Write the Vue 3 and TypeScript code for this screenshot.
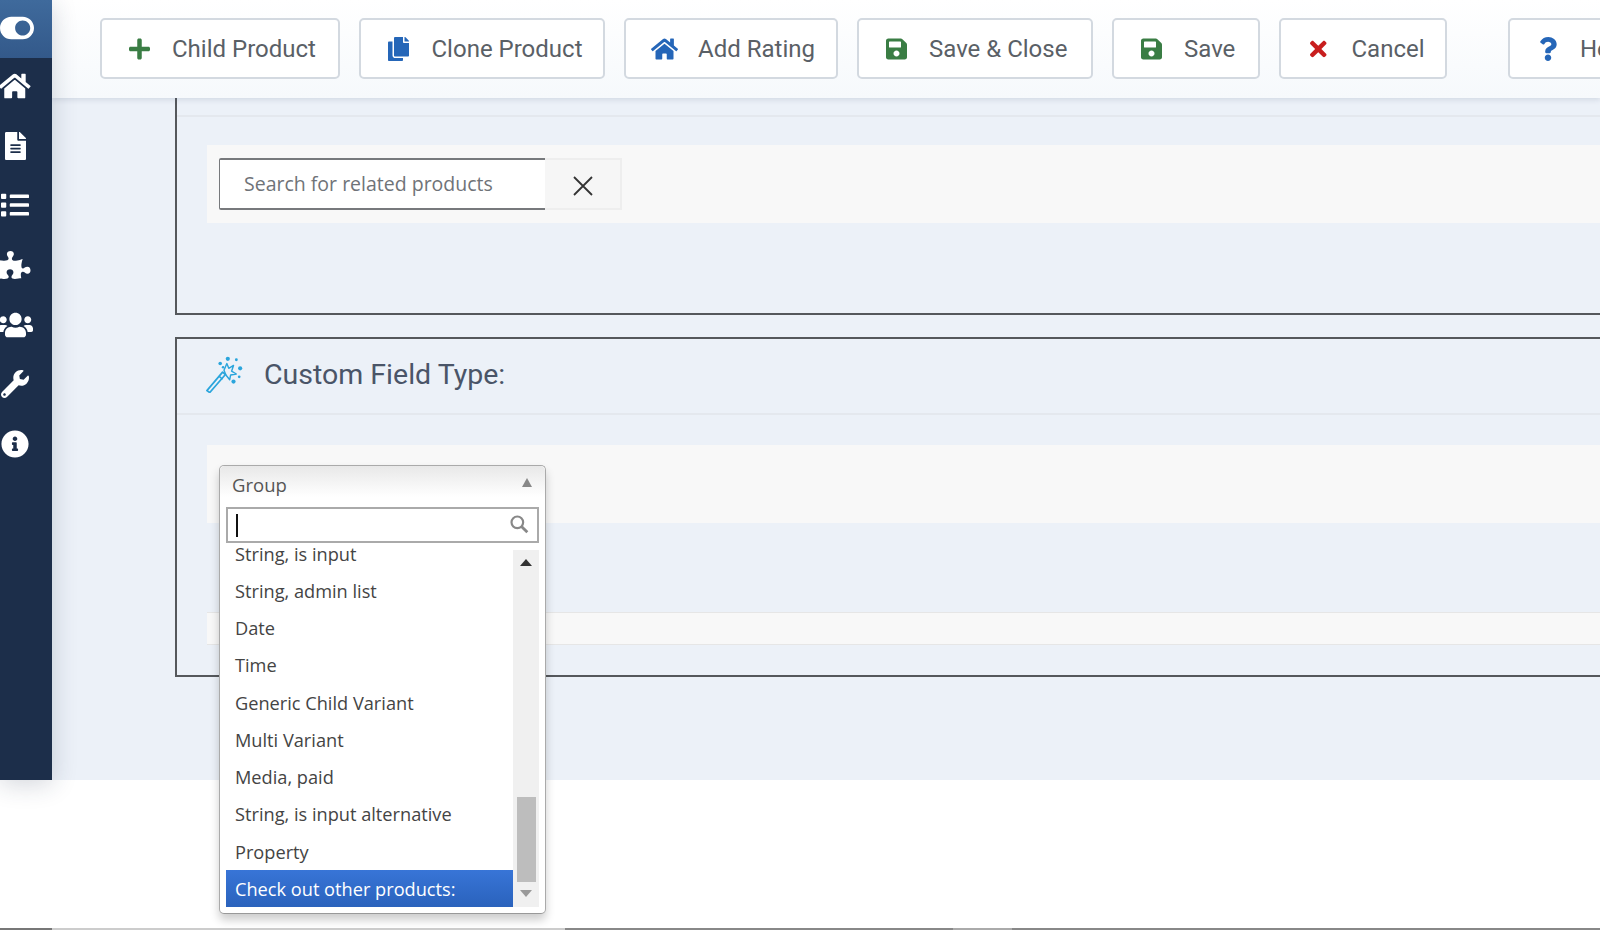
<template>
  <div class="page">
    <div class="frame">
      <aside class="sidebar">
        <div class="brand">
          <svg class="side-icon" viewBox="0 0 576 512"><path :d="icons.toggle" /></svg>
        </div>
        <nav class="side-nav">
          <a v-for="item in sideItems" :key="item.name" class="side-item">
            <svg class="side-icon" :viewBox="item.box"><path :d="item.path" /></svg>
          </a>
        </nav>
      </aside>

      <main class="main">
        <header class="toolbar">
          <button v-for="btn in buttons" :key="btn.label" class="tool-btn" :class="btn.cls">
            <svg class="tool-icon" :class="btn.color" :viewBox="btn.box"><path :d="btn.path" /></svg>
            <span>{{ btn.label }}</span>
          </button>
        </header>

        <div class="content">
          <section class="panel first">
            <div class="panel-head-end"></div>
            <div class="strip search-strip">
              <div class="search-group">
                <input class="search-input" placeholder="Search for related products" />
                <button class="search-clear" aria-label="Clear">
                  <svg width="22" height="22" viewBox="0 0 22 22" fill="none">
                    <path d="M2 2L20 20M20 2L2 20" stroke="#333" stroke-width="1.8" />
                  </svg>
                </button>
              </div>
            </div>
          </section>

          <section class="panel second">
            <div class="panel-head">
              <svg class="wand" viewBox="0 0 40 40" fill="none">
                <path d="M2 37.5L18.5 18L21.5 20.5L5 39.5Z" stroke="#2aa5dc" stroke-width="1.8" stroke-linejoin="round" />
                <path d="M15 22.5L18.5 25.5" stroke="#2aa5dc" stroke-width="1.6" />
                <path d="M20 16L23 9L25 14L30 11L28 17L33 20L27 21L26 26L22 21Z" stroke="#2aa5dc" stroke-width="1.5" stroke-linejoin="round" />
                <g fill="#2aa5dc">
                  <circle cx="24" cy="4" r="2.2" />
                  <circle cx="33" cy="5" r="1.5" />
                  <circle cx="16" cy="9" r="1.9" />
                  <circle cx="37" cy="14" r="2.2" />
                  <circle cx="30" cy="28" r="2.2" />
                  <circle cx="19" cy="13" r="1.3" />
                  <circle cx="36" cy="23" r="1.4" />
                </g>
              </svg>
              <h2>Custom Field Type:</h2>
            </div>
            <div class="strip group-strip"></div>
            <div class="strip thin"></div>
          </section>
        </div>
      </main>
    </div>

    <footer class="foot-line"></footer>

    <!-- open chosen style dropdown, lies over the panel -->
    <div class="chosen">
      <div class="chosen-head">
        <span>Group</span>
        <i class="arrow-up"></i>
      </div>
      <div class="chosen-search">
        <i class="caret"></i>
        <svg class="search-icon" viewBox="0 0 24 24" fill="none">
          <circle cx="10" cy="10" r="7" stroke="#888" stroke-width="2.6" />
          <path d="M15 15L22 22" stroke="#888" stroke-width="3.4" />
        </svg>
      </div>
      <div class="chosen-body">
        <ul class="chosen-list">
          <li v-for="opt in options" :key="opt" :class="{ active: opt === selected }">{{ opt }}</li>
        </ul>
        <div class="scrollbar">
          <i class="sb-up"></i>
          <i class="sb-thumb"></i>
          <i class="sb-down"></i>
        </div>
      </div>
    </div>
  </div>
</template>

<script setup lang="ts">
const icons = {
  toggle: 'M384 64H192C86 64 0 150 0 256s86 192 192 192h192c106 0 192-86 192-192S490 64 384 64zm0 320c-70.8 0-128-57.3-128-128 0-70.8 57.3-128 128-128 70.8 0 128 57.3 128 128 0 70.8-57.3 128-128 128z',
  home: 'M280.37 148.26L96 300.11V464a16 16 0 0 0 16 16l112.06-.29a16 16 0 0 0 15.92-16V368a16 16 0 0 1 16-16h64a16 16 0 0 1 16 16v95.64a16 16 0 0 0 16 16.05L464 480a16 16 0 0 0 16-16V300L295.67 148.26a12.19 12.19 0 0 0-15.3 0zM571.6 251.47L488 182.56V44.05a12 12 0 0 0-12-12h-56a12 12 0 0 0-12 12v72.61L318.47 43a48 48 0 0 0-61 0L4.34 251.47a12 12 0 0 0-1.6 16.9l25.5 31A12 12 0 0 0 45.15 301l235.22-193.74a12.19 12.19 0 0 1 15.3 0L530.9 301a12 12 0 0 0 16.9-1.6l25.5-31a12 12 0 0 0-1.7-16.93z',
  file: 'M224 136V0H24C10.7 0 0 10.7 0 24v464c0 13.3 10.7 24 24 24h336c13.3 0 24-10.7 24-24V160H248c-13.2 0-24-10.8-24-24zm64 236c0 6.6-5.4 12-12 12H108c-6.6 0-12-5.4-12-12v-8c0-6.6 5.4-12 12-12h168c6.6 0 12 5.4 12 12v8zm0-64c0 6.6-5.4 12-12 12H108c-6.6 0-12-5.4-12-12v-8c0-6.6 5.4-12 12-12h168c6.6 0 12 5.4 12 12v8zm0-72v8c0 6.6-5.4 12-12 12H108c-6.6 0-12-5.4-12-12v-8c0-6.6 5.4-12 12-12h168c6.6 0 12 5.4 12 12zm96-114.1v6.1H256V0h6.1c6.4 0 12.5 2.5 17 7l97.9 98c4.5 4.5 7 10.6 7 16.9z',
  list: 'M80 368H16a16 16 0 0 0-16 16v64a16 16 0 0 0 16 16h64a16 16 0 0 0 16-16v-64a16 16 0 0 0-16-16zm0-320H16A16 16 0 0 0 0 64v64a16 16 0 0 0 16 16h64a16 16 0 0 0 16-16V64a16 16 0 0 0-16-16zm0 160H16a16 16 0 0 0-16 16v64a16 16 0 0 0 16 16h64a16 16 0 0 0 16-16v-64a16 16 0 0 0-16-16zm416 176H176a16 16 0 0 0-16 16v32a16 16 0 0 0 16 16h320a16 16 0 0 0 16-16v-32a16 16 0 0 0-16-16zm0-320H176a16 16 0 0 0-16 16v32a16 16 0 0 0 16 16h320a16 16 0 0 0 16-16V80a16 16 0 0 0-16-16zm0 160H176a16 16 0 0 0-16 16v32a16 16 0 0 0 16 16h320a16 16 0 0 0 16-16v-32a16 16 0 0 0-16-16z',
  puzzle: 'M519.442 288.651c-41.519 0-59.5 31.593-82.058 31.593C377.409 320.244 432 144 432 144s-196.288 80-196.288-3.297c0-35.827 36.288-46.25 36.288-85.985C272 19.216 243.885 0 210.539 0c-34.654 0-66.366 18.891-66.366 56.346 0 41.364 31.711 59.277 31.711 81.75C175.885 207.719 0 166.758 0 166.758v333.237s178.635 41.047 178.635-28.662c0-22.473-40-40.107-40-81.471 0-37.456 29.25-56.346 63.577-56.346 33.673 0 61.788 19.216 61.788 54.717 0 39.735-36.288 50.158-36.288 85.985 0 60.803 129.675 25.73 181.23 25.73 0 0-34.725-120.101 25.827-120.101 35.962 0 46.423 36.152 86.308 36.152C556.712 416 576 387.99 576 354.443c0-34.199-18.962-65.792-56.558-65.792z',
  users: 'M96 224c35.3 0 64-28.7 64-64s-28.7-64-64-64-64 28.7-64 64 28.7 64 64 64zm448 0c35.3 0 64-28.7 64-64s-28.7-64-64-64-64 28.7-64 64 28.7 64 64 64zm32 32h-64c-17.6 0-33.5 7.1-45.1 18.6 40.3 22.1 68.9 62 75.1 109.4h66c17.7 0 32-14.3 32-32v-32c0-35.3-28.7-64-64-64zm-256 0c61.9 0 112-50.1 112-112S381.9 32 320 32 208 82.1 208 144s50.1 112 112 112zm76.8 32h-8.3c-20.8 10-43.9 16-68.5 16s-47.6-6-68.5-16h-8.3C179.6 288 128 339.6 128 403.2V432c0 26.5 21.5 48 48 48h288c26.5 0 48-21.5 48-48v-28.8c0-63.6-51.6-115.2-115.2-115.2zm-223.7-13.4C161.5 263.1 145.6 256 128 256H64c-35.3 0-64 28.7-64 64v32c0 17.7 14.3 32 32 32h65.9c6.3-47.4 34.9-87.3 75.2-109.4z',
  wrench: 'M507.73 109.1c-2.24-9.03-13.54-12.09-20.12-5.51l-74.36 74.36-67.88-11.31-11.31-67.88 74.36-74.36c6.62-6.62 3.43-17.9-5.66-20.16-47.38-11.74-99.55.91-136.58 37.93-39.64 39.64-50.55 97.1-34.05 147.2L18.74 402.76c-24.99 24.99-24.99 65.51 0 90.5 24.99 24.99 65.51 24.99 90.5 0l213.21-213.21c50.12 16.71 107.47 5.68 147.37-34.22 37.07-37.07 49.7-89.32 37.91-136.73zM64 472c-13.25 0-24-10.75-24-24 0-13.26 10.75-24 24-24s24 10.74 24 24c0 13.25-10.75 24-24 24z',
  info: 'M256 8C119.043 8 8 119.083 8 256c0 136.997 111.043 248 248 248s248-111.003 248-248C504 119.083 392.957 8 256 8zm0 110c23.196 0 42 18.804 42 42s-18.804 42-42 42-42-18.804-42-42 18.804-42 42-42zm56 254c0 6.627-5.373 12-12 12h-88c-6.627 0-12-5.373-12-12v-24c0-6.627 5.373-12 12-12h12v-64h-12c-6.627 0-12-5.373-12-12v-24c0-6.627 5.373-12 12-12h64c6.627 0 12 5.373 12 12v100h12c6.627 0 12 5.373 12 12v24z',
  plus: 'M416 208H272V64c0-17.67-14.33-32-32-32h-32c-17.67 0-32 14.33-32 32v144H32c-17.67 0-32 14.33-32 32v32c0 17.67 14.33 32 32 32h144v144c0 17.67 14.33 32 32 32h32c17.67 0 32-14.33 32-32V304h144c17.67 0 32-14.33 32-32v-32c0-17.67-14.33-32-32-32z',
  copy: 'M320 448v40c0 13.255-10.745 24-24 24H24c-13.255 0-24-10.745-24-24V120c0-13.255 10.745-24 24-24h72v296c0 30.879 25.121 56 56 56h168zm0-344V0H152c-13.255 0-24 10.745-24 24v368c0 13.255 10.745 24 24 24h272c13.255 0 24-10.745 24-24V128H344c-13.2 0-24-10.8-24-24zm120.971-31.029L375.029 7.029A24 24 0 0 0 358.059 0H352v96h96v-6.059a24 24 0 0 0-7.029-16.97z',
  save: 'M433.941 129.941l-83.882-83.882A48 48 0 0 0 316.118 32H48C21.49 32 0 53.49 0 80v352c0 26.51 21.49 48 48 48h352c26.51 0 48-21.49 48-48V163.882a48 48 0 0 0-14.059-33.941zM224 416c-35.346 0-64-28.654-64-64 0-35.346 28.654-64 64-64s64 28.654 64 64c0 35.346-28.654 64-64 64zm96-304.52V212c0 6.627-5.373 12-12 12H76c-6.627 0-12-5.373-12-12V108c0-6.627 5.373-12 12-12h228.52c3.183 0 6.235 1.264 8.485 3.515l3.48 3.48A11.996 11.996 0 0 1 320 111.48z',
  times: 'M242.72 256l100.07-100.07c12.28-12.28 12.28-32.19 0-44.48l-22.24-22.24c-12.28-12.28-32.19-12.28-44.48 0L176 189.28 75.93 89.21c-12.28-12.28-32.19-12.28-44.48 0L9.21 111.45c-12.28 12.28-12.28 32.19 0 44.48L109.28 256 9.21 356.07c-12.28 12.28-12.28 32.19 0 44.48l22.24 22.24c12.28 12.28 32.2 12.28 44.48 0L176 322.72l100.07 100.07c12.28 12.28 32.2 12.28 44.48 0l22.24-22.24c12.28-12.28 12.28-32.19 0-44.48L242.72 256z',
  question: 'M202.021 0C122.202 0 70.503 32.703 29.914 91.026c-7.363 10.58-5.093 25.086 5.178 32.874l43.138 32.709c10.373 7.865 25.132 6.026 33.253-4.148 25.049-31.381 43.63-49.449 82.757-49.449 30.764 0 68.816 19.799 68.816 49.631 0 22.552-18.617 34.134-48.993 51.164-35.423 19.86-82.299 44.576-82.299 106.405V320c0 13.255 10.745 24 24 24h72.471c13.255 0 24-10.745 24-24v-5.773c0-42.86 125.268-44.645 125.268-160.627C377.504 66.256 286.902 0 202.021 0zM192 373.459c-38.196 0-69.271 31.075-69.271 69.271 0 38.195 31.075 69.27 69.271 69.27s69.271-31.075 69.271-69.271-31.075-69.27-69.271-69.27z',
}

const sideItems = [
  { name: 'home', box: '0 0 576 512', path: icons.home },
  { name: 'file', box: '0 0 384 512', path: icons.file },
  { name: 'list', box: '0 0 512 512', path: icons.list },
  { name: 'puzzle', box: '0 0 576 512', path: icons.puzzle },
  { name: 'users', box: '0 0 640 512', path: icons.users },
  { name: 'wrench', box: '0 0 512 512', path: icons.wrench },
  { name: 'info', box: '0 0 512 512', path: icons.info },
]

const buttons = [
  { label: 'Child Product', box: '0 0 448 512', path: icons.plus, color: 'green', cls: 'w-child' },
  { label: 'Clone Product', box: '0 0 448 512', path: icons.copy, color: 'blue', cls: 'w-clone' },
  { label: 'Add Rating', box: '0 0 576 512', path: icons.home, color: 'blue', cls: 'w-rating' },
  { label: 'Save & Close', box: '0 0 448 512', path: icons.save, color: 'green', cls: 'w-saveclose' },
  { label: 'Save', box: '0 0 448 512', path: icons.save, color: 'green', cls: 'w-save' },
  { label: 'Cancel', box: '0 0 352 512', path: icons.times, color: 'red', cls: 'w-cancel' },
  { label: 'Help', box: '0 0 384 512', path: icons.question, color: 'blue', cls: 'w-help' },
]

const options = [
  'String, is input',
  'String, admin list',
  'Date',
  'Time',
  'Generic Child Variant',
  'Multi Variant',
  'Media, paid',
  'String, is input alternative',
  'Property',
  'Check out other products:',
]
const selected = 'Check out other products:'
</script>

<style>
html,
body {
  margin: 0;
  background: #fff;
}
</style>

<style scoped>
.page {
  position: relative;
  width: 1600px;
  height: 930px;
  overflow: hidden;
  background: #fff;
  font-family: Roboto, "Liberation Sans", sans-serif;
}

.frame {
  display: flex;
  height: 780px;
}

.sidebar {
  flex: 0 0 52px;
  background: #1c2e4a;
  box-shadow: 0 4px 26px rgba(28, 46, 74, 0.2);
  position: relative;
  z-index: 5;
}

.brand {
  display: flex;
  align-items: center;
  box-sizing: border-box;
  height: 58px;
  padding-bottom: 2px;
  background: linear-gradient(#3f6a9c, #33598a);
}

.brand .side-icon {
  height: 38px;
  width: 34px;
}

.side-nav {
  margin-top: -2px;
}

.side-item {
  display: flex;
  align-items: center;
  justify-content: center;
  width: 30px;
  height: 59.7px;
}

.side-icon {
  flex: none;
  height: 28px;
  fill: #fff;
}

.main {
  flex: 1;
  min-width: 0;
  display: flex;
  flex-direction: column;
  overflow: hidden;
  background: #ecf1f8;
}

.toolbar {
  flex: 0 0 98px;
  box-sizing: border-box;
  display: flex;
  align-items: center;
  gap: 19px;
  padding: 0 0 1px 48px;
  background: linear-gradient(#fff, #f6f9fc);
  box-shadow: 0 2px 5px rgba(60, 80, 110, 0.14);
  position: relative;
  z-index: 3;
}

.tool-btn {
  flex: none;
  display: flex;
  align-items: center;
  gap: 22px;
  height: 61px;
  padding: 0 0 0 27px;
  border: 2px solid #d3d9e0;
  border-radius: 5px;
  background: #fff;
  color: #5a6066;
  font-family: inherit;
  font-size: 24px;
  white-space: nowrap;
}

.w-child { width: 240px; }
.w-clone { width: 246px; gap: 22.5px; }
.w-rating { width: 214px; padding-left: 25px; gap: 20px; }
.w-saveclose { width: 236px; }
.w-save { width: 148px; }
.w-cancel { width: 168px; padding-left: 29px; gap: 25px; }
.w-help { margin-left: 42px; padding-left: 29px; gap: 23px; }

.tool-icon {
  flex: none;
  height: 24px;
}

.green { fill: #3a7d44; }
.blue { fill: #2566b8; }
.red { fill: #c81e1e; }

.content {
  flex: 1;
  padding-left: 123px;
}

.panel {
  width: 1500px;
  border: 2px solid #55585c;
  box-sizing: border-box;
}

.first {
  height: 217px;
  border-top: 0;
}

.panel-head-end {
  height: 17px;
  border-bottom: 2px solid #e4e8ee;
}

.strip {
  margin-top: 28px;
  margin-left: 30px;
  height: 78px;
  background: #f8f8f8;
}

.search-strip {
  display: flex;
  align-items: center;
  box-sizing: border-box;
  padding-bottom: 1px;
}

.search-group {
  display: flex;
  margin-left: 12px;
  height: 52px;
}

.search-input {
  width: 326px;
  box-sizing: border-box;
  padding: 0 24px;
  border: 2px solid #77797c;
  border-left-width: 1px;
  border-right: 0;
  border-radius: 2px 0 0 2px;
  background: #fff;
  font-family: "Open Sans", sans-serif;
  font-size: 19.5px;
  color: #666;
  outline: none;
}

.search-input::placeholder {
  color: #6f7378;
}

.search-clear {
  width: 77px;
  display: flex;
  align-items: center;
  justify-content: center;
  padding: 5px 0 0;
  border: 2px solid #eee;
  border-left: 0;
  background: #f6f6f6;
}

.second {
  margin-top: 22px;
  height: 340px;
}

.panel-head {
  display: flex;
  align-items: center;
  box-sizing: border-box;
  gap: 21px;
  height: 76px;
  padding: 0 0 4px 28px;
  border-bottom: 2px solid #e4e8ee;
}

.wand {
  width: 38px;
  height: 38px;
}

.panel-head h2 {
  margin: 0;
  font-size: 28.5px;
  font-weight: 400;
  color: #4a5568;
}

.group-strip {
  margin-top: 30px;
}

.strip.thin {
  margin-top: 89px;
  height: 33px;
  border-top: 1px solid #e6e6e6;
  border-bottom: 1px solid #e6e6e6;
  box-sizing: border-box;
}

.foot-line {
  position: absolute;
  left: 0;
  right: 0;
  bottom: 0;
  height: 2px;
  background: linear-gradient(90deg, #777 52px, #ccc 52px, #ccc 565px, #888 565px, #888 953px, #aaa 953px, #aaa 1012px, #888 1012px);
}

.chosen {
  position: absolute;
  left: 219px;
  top: 465px;
  z-index: 10;
  display: flex;
  flex-direction: column;
  width: 327px;
  height: 449px;
  box-sizing: border-box;
  padding: 0 6px 6px;
  border: 1.5px solid #aaa;
  border-bottom-color: #999;
  border-radius: 5px;
  background: #fff;
  box-shadow: 0 6px 10px rgba(0, 0, 0, 0.2);
  font-family: "Open Sans", sans-serif;
  color: #444;
}

.chosen-head {
  flex: none;
  display: flex;
  align-items: center;
  justify-content: space-between;
  box-sizing: border-box;
  height: 41px;
  margin: 0 -6px;
  padding: 0 13px 4px 12px;
  border-radius: 5px 5px 0 0;
  background: linear-gradient(#e8e8e8, #fff 75%);
  font-size: 18.5px;
  color: #555;
}

.arrow-up {
  margin-bottom: 4px;
  border: 5.5px solid transparent;
  border-top: 0;
  border-bottom: 9px solid #888;
}

.chosen-search {
  flex: none;
  display: flex;
  align-items: center;
  justify-content: space-between;
  height: 36px;
  box-sizing: border-box;
  padding: 0 8px;
  border: 2px solid #aaa;
}

.caret {
  width: 2px;
  height: 23px;
  background: #111;
}

.search-icon {
  width: 20px;
  height: 20px;
  margin-bottom: 2px;
}

.chosen-body {
  flex: 1;
  min-height: 0;
  display: flex;
  padding-top: 7px;
}

.chosen-list {
  flex: 1;
  display: flex;
  flex-direction: column;
  justify-content: flex-end;
  margin: -7px 0 0;
  padding: 0;
  list-style: none;
  overflow: hidden;
  font-size: 18.2px;
}

.chosen-list li {
  flex: none;
  height: 37.25px;
  line-height: 39px;
  padding-left: 9px;
  white-space: nowrap;
}

.chosen-list li.active {
  background: linear-gradient(#3875d7, #2a62bc);
  color: #fff;
}

.scrollbar {
  flex: 0 0 26px;
  display: flex;
  flex-direction: column;
  align-items: center;
  background: #f0f0f0;
}

.scrollbar i {
  display: block;
  flex: none;
}

.sb-up {
  margin-top: 9px;
  border: 6px solid transparent;
  border-top: 0;
  border-bottom: 7px solid #333;
}

.sb-thumb {
  width: 19px;
  height: 85px;
  margin-top: auto;
  background: #bdbdbd;
}

.sb-down {
  margin: 8px 0 10px;
  border: 6px solid transparent;
  border-bottom: 0;
  border-top: 7px solid #999;
}
</style>
